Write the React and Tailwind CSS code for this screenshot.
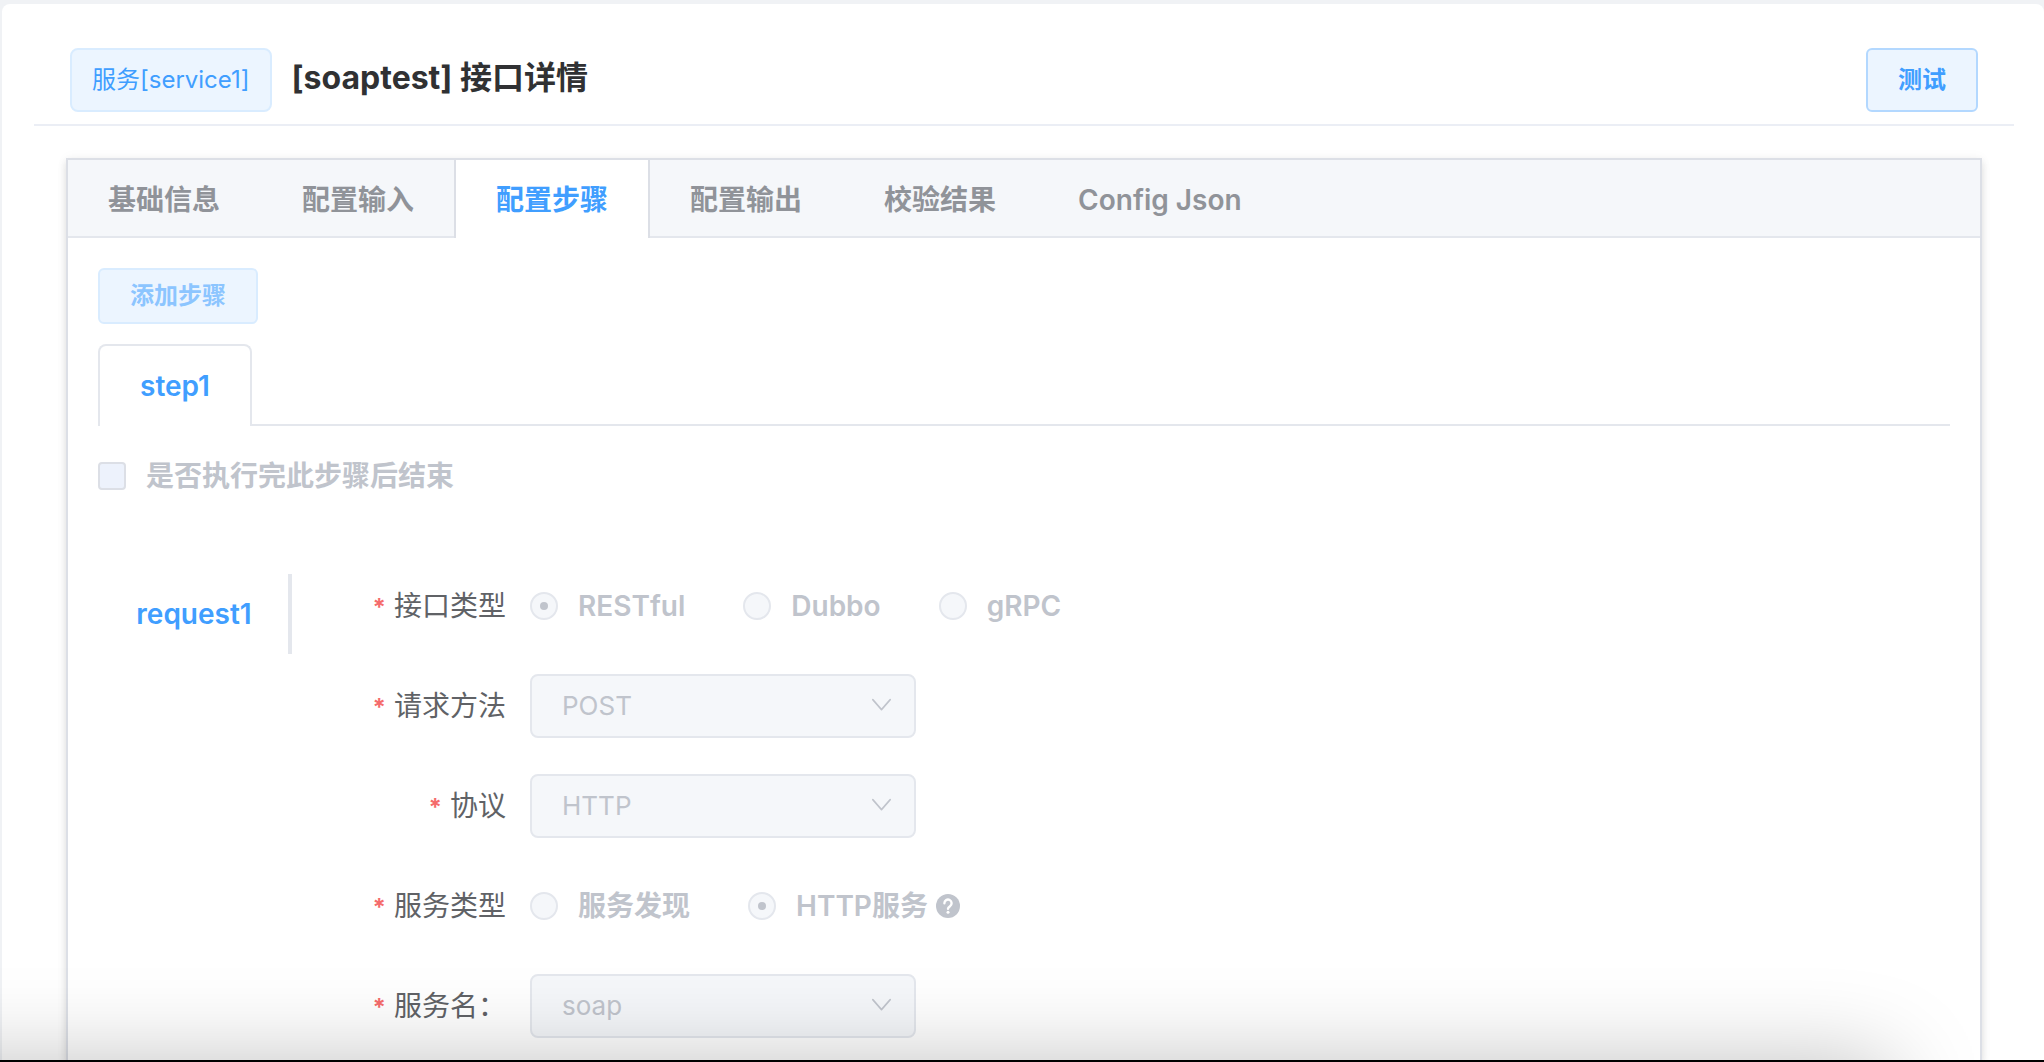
import React, { useState } from "react";
import clsx from "clsx";

const TABS = ["基础信息", "配置输入", "配置步骤", "配置输出", "校验结果", "Config Json"];

const ChevronIcon = () => (
  <svg
    className="absolute right-6 top-6 w-5 h-4 text-[#c0c4cc] pointer-events-none"
    viewBox="0 0 20 16"
    fill="none"
    stroke="currentColor"
    strokeWidth="1.6"
    strokeLinecap="round"
    strokeLinejoin="round"
  >
    <path d="M0.8 1.6l8.7 10L18.2 1.6" />
  </svg>
);

const HelpIcon = () => (
  <svg className="w-6 h-6 ml-2 text-[#c0c4cc]" viewBox="0 0 24 24" fill="none">
    <circle cx="12" cy="12" r="12" fill="currentColor" />
    <path
      d="M8.4 9.2a3.6 3.6 0 1 1 5.6 3c-1.3 0.9-2 1.4-2 2.5"
      stroke="white"
      strokeWidth="2.4"
      strokeLinecap="round"
    />
    <circle cx="12" cy="18.2" r="1.5" fill="white" />
  </svg>
);

const FormRow = ({ label, htmlFor, children }) => {
  const Label = htmlFor ? "label" : "span";
  return (
    <div className="flex items-center h-16">
      <Label
        htmlFor={htmlFor}
        className="w-[238px] pr-6 flex-shrink-0 text-right text-[#606266]"
      >
        <span className="mr-2 text-2xl font-bold text-[#f56c6c]">*</span>
        {label}
      </Label>
      {children}
    </div>
  );
};

const Radio = ({ name, label, checked, children }) => (
  <label className="flex items-center mr-[58px] font-semibold text-[#c0c4cc] cursor-not-allowed">
    <input
      type="radio"
      name={name}
      defaultChecked={checked}
      disabled
      className="appearance-none flex items-center justify-center w-7 h-7 mr-5 rounded-full border-2 border-[#e4e7ed] bg-[#f5f7fa] checked:before:block checked:before:w-2 checked:before:h-2 checked:before:rounded-full checked:before:bg-[#c0c4cc]"
    />
    {label}
    {children}
  </label>
);

const SelectBox = ({ id, value }) => (
  <div className="relative w-[386px]">
    <select
      id={id}
      defaultValue={value}
      disabled
      className="appearance-none w-full h-16 px-[30px] rounded-lg border-2 border-[#e4e7ed] bg-[#f5f7fa] text-[26px] text-[#c0c4cc] opacity-100 cursor-not-allowed"
    >
      <option>{value}</option>
    </select>
    <ChevronIcon />
  </div>
);

const App = () => {
  const [activeTab, setActiveTab] = useState("配置步骤");

  return (
    <div className="min-h-screen flex flex-col pt-1 pl-0.5 overflow-x-hidden bg-[#f0f2f5] font-['Inter','Noto_Sans_CJK_SC',sans-serif] text-[28px] leading-10">
      <div className="flex-1 flex flex-col rounded-t-lg bg-white pt-11 pl-8 pr-[30px]">
        {/* Header */}
        <header className="flex items-center justify-between px-9 pb-3 border-b-2 border-[#ebeef5]">
          <div className="flex items-center gap-5">
            <span className="flex items-center h-16 px-5 rounded-lg border-2 border-[#d9ecff] bg-[#ecf5ff] text-2xl text-[#409eff]">
              服务[service1]
            </span>
            <h1 className="pb-1 text-[32px] font-bold text-[#303133]">
              [soaptest] 接口详情
            </h1>
          </div>
          <button
            type="button"
            className="h-16 px-[30px] rounded-md border-2 border-[#b3d8ff] bg-[#ecf5ff] text-2xl font-semibold text-[#409eff]"
          >
            测试
          </button>
        </header>

        {/* Panel */}
        <main className="flex-1 flex flex-col mt-8 mx-8 border-2 border-b-0 border-[#dcdfe6] bg-white shadow-[0_4px_8px_rgba(0,0,0,0.12),0_0_12px_rgba(0,0,0,0.04)]">
          <div className="flex h-[78px] border-b-2 border-[#e4e7ed] bg-[#f5f7fa]">
            {TABS.map((tab) => (
              <button
                key={tab}
                type="button"
                onClick={() => setActiveTab(tab)}
                className={clsx(
                  "h-[78px] px-10 pt-0.5 -ml-0.5 border-x-2 font-semibold",
                  tab === activeTab
                    ? "border-[#dcdfe6] bg-white text-[#409eff]"
                    : "border-transparent text-[#909399]"
                )}
              >
                {tab}
              </button>
            ))}
          </div>

          <div className="p-[30px] pb-5">
            <button
              type="button"
              disabled
              className="block h-14 px-[30px] rounded-md border-2 border-[#d9ecff] bg-[#ecf5ff] text-2xl font-semibold text-[#8cc5ff]"
            >
              添加步骤
            </button>

            {/* Steps */}
            <div className="flex h-[82px] mt-5 mb-[30px] border-b-2 border-[#e4e7ed]">
              <button
                type="button"
                className="h-[82px] px-10 rounded-t-lg border-2 border-b-0 border-[#e4e7ed] bg-white font-semibold text-[#409eff]"
              >
                step1
              </button>
            </div>

            <label className="flex items-center gap-5 w-fit font-semibold text-[#c0c4cc] cursor-not-allowed">
              <input
                type="checkbox"
                disabled
                className="appearance-none w-7 h-7 rounded-sm border-2 border-[#dcdfe6] bg-[#edf2fc]"
              />
              是否执行完此步骤后结束
            </label>

            {/* Request */}
            <div className="flex items-start mt-[78px]">
              <button
                type="button"
                className="w-[194px] h-20 pl-0.5 border-r-4 border-[#e4e7ed] font-semibold text-[#409eff]"
              >
                request1
              </button>
              <form className="flex-1 flex flex-col gap-9">
                <FormRow label="接口类型">
                  <Radio name="apiType" label="RESTful" checked />
                  <Radio name="apiType" label="Dubbo" />
                  <Radio name="apiType" label="gRPC" />
                </FormRow>
                <FormRow label="请求方法" htmlFor="method">
                  <SelectBox id="method" value="POST" />
                </FormRow>
                <FormRow label="协议" htmlFor="protocol">
                  <SelectBox id="protocol" value="HTTP" />
                </FormRow>
                <FormRow label="服务类型">
                  <Radio name="serviceType" label="服务发现" />
                  <Radio name="serviceType" label="HTTP服务" checked>
                    <HelpIcon />
                  </Radio>
                </FormRow>
                <FormRow label="服务名：" htmlFor="service">
                  <SelectBox id="service" value="soap" />
                </FormRow>
              </form>
            </div>
          </div>
        </main>
      </div>

      {/* Bottom edge, its shadow falls over the page */}
      <div className="fixed -left-60 right-[154px] -bottom-60 h-60 shadow-[0_0_90px_rgba(0,0,0,0.25)] pointer-events-none" />
      <div className="fixed inset-x-0 bottom-0 h-0.5 bg-black pointer-events-none" />
    </div>
  );
};

export default App;
